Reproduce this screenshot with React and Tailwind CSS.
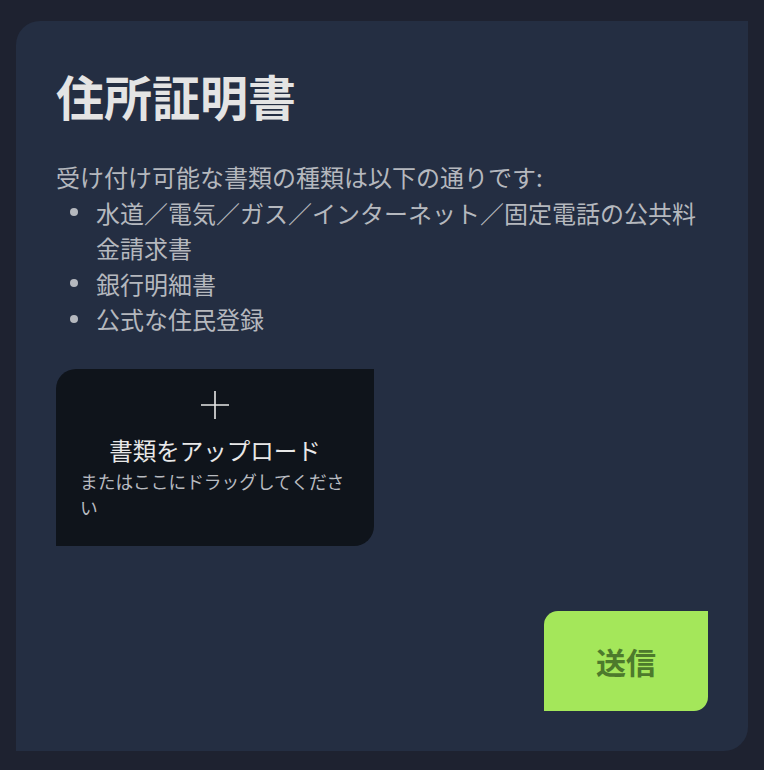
import React from "react";

const documents = [
  "水道／電気／ガス／インターネット／固定電話の公共料金請求書",
  "銀行明細書",
  "公式な住民登録",
];

const AddressProof = () => {
  return (
    <div className="min-h-screen bg-[#1e2230] px-4 pt-[21px] pb-[19px] font-['Noto_Sans_CJK_JP','Noto_Sans',sans-serif]">
      <div className="flex h-[730px] flex-col rounded-tl-[24px] rounded-br-[24px] bg-[#242e42] p-10">
        {/* Heading */}
        <h1 className="text-[48px] font-bold leading-[68px] text-[#e4e4e4]">
          住所証明書
        </h1>

        {/* Accepted documents */}
        <div className="mt-[30px] text-[24px] leading-[35.5px] text-[#b5b8be]">
          <p>受け付け可能な書類の種類は以下の通りです:</p>
          <ul>
            {documents.map((doc) => (
              <li key={doc} className="flex items-start">
                <span className="flex h-[35.5px] w-[40px] shrink-0 items-center">
                  <span className="ml-[14px] h-2 w-2 rounded-full bg-[#b5b8be]"></span>
                </span>
                <span>{doc}</span>
              </li>
            ))}
          </ul>
        </div>

        {/* Upload */}
        <label className="mt-8 flex w-[318px] cursor-pointer flex-col items-center rounded-tl-[20px] rounded-br-[20px] bg-[#0f141b] px-6 pt-[21px] pb-[26px]">
          <svg
            width="30"
            height="30"
            viewBox="0 0 30 30"
            fill="none"
            stroke="#e6e6e6"
            strokeWidth="1.6"
          >
            <path d="M15 1v28M1 15h28" />
          </svg>
          <span className="mt-[14px] text-[23.5px] leading-[32px] text-[#e8e8e8]">
            書類をアップロード
          </span>
          <span className="mt-0.5 self-stretch text-[17.7px] leading-[26px] text-[#b8bbc0]">
            またはここにドラッグしてください
          </span>
          <input type="file" className="hidden" />
        </label>

        {/* Submit */}
        <div className="mt-auto flex justify-end">
          <button
            type="button"
            className="flex h-[100px] w-[164px] items-center justify-center rounded-tl-[14px] rounded-br-[14px] bg-[#a4e75a] text-[30px] font-bold text-[#4d7a2c]"
          >
            送信
          </button>
        </div>
      </div>
    </div>
  );
};

export default AddressProof;
